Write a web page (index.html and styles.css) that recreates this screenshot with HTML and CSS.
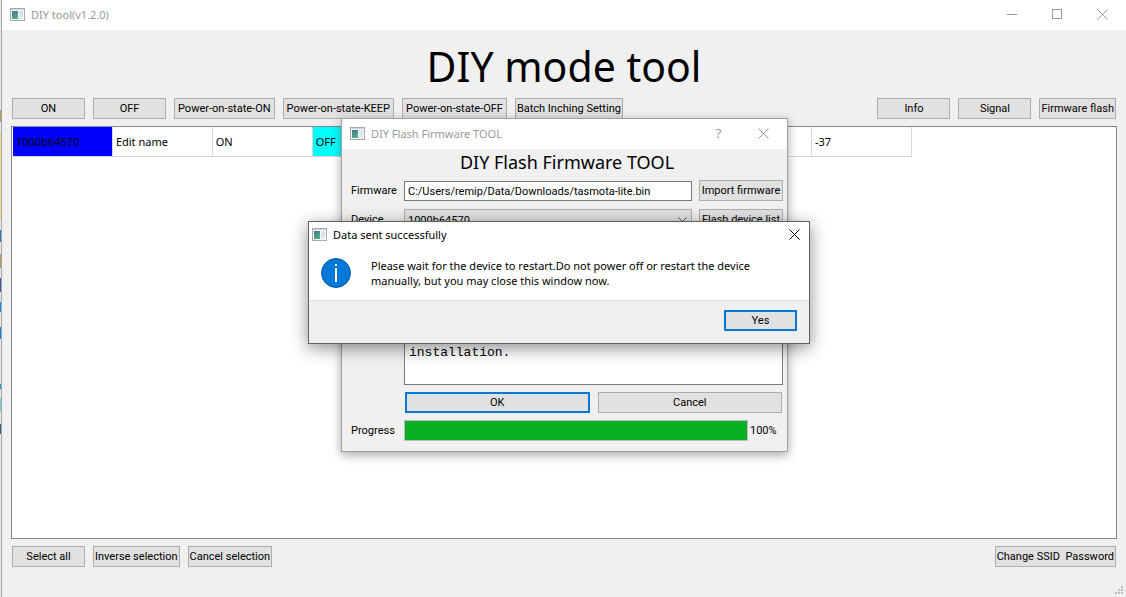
FILE: index.html
```html
<!DOCTYPE html>
<html lang="en">
<head>
  <meta charset="UTF-8" />
  <meta name="viewport" content="width=device-width, initial-scale=1.0"/>
  <title>DIY tool(v1.2.0)</title>
  <link rel="stylesheet" href="styles.css">
</head>
<body>
  <!-- App icon shared by the three windows -->
  <svg class="defs" width="0" height="0" aria-hidden="true">
    <defs>
      <linearGradient id="iconFill" x1="0" y1="0" x2="0.4" y2="1">
        <stop offset="0" stop-color="#4a6f9c"/>
        <stop offset="1" stop-color="#4fae7d"/>
      </linearGradient>
    </defs>
    <symbol id="app-icon" viewBox="0 0 15 13">
      <rect x="0.5" y="0.5" width="14" height="12" fill="#f4f7f9" stroke="#a3abb1"/>
      <rect x="1" y="1" width="13" height="1" fill="#c9d2da"/>
      <rect x="2" y="3" width="6" height="8" fill="url(#iconFill)"/>
      <rect x="9" y="3" width="3" height="8" fill="#dde3e8"/>
      <rect x="12" y="3" width="1" height="5" fill="#cfe6da"/>
    </symbol>
    <symbol id="close-icon" viewBox="0 0 11 11">
      <path d="M0.5 0.5 L10.5 10.5 M10.5 0.5 L0.5 10.5" fill="none" stroke="currentColor"/>
    </symbol>
  </svg>

  <div class="desktop-edge"></div>

  <!-- ================== Main window ================== -->
  <main class="main-window">
    <header class="titlebar inactive">
      <svg class="app-icon" aria-hidden="true"><use href="#app-icon"/></svg>
      <span class="window-name">DIY tool(v1.2.0)</span>
      <button class="caption" aria-label="Minimize">
        <svg width="11" height="11"><path d="M0 5.5 H10" stroke="currentColor"/></svg>
      </button>
      <button class="caption" aria-label="Maximize">
        <svg width="11" height="11"><rect x="0.5" y="0.5" width="9" height="9" fill="none" stroke="currentColor"/></svg>
      </button>
      <button class="caption" aria-label="Close"><svg width="11" height="11"><use href="#close-icon"/></svg></button>
    </header>

    <h1>DIY mode tool</h1>

    <div class="toolbar">
      <button class="btn">ON</button>
      <button class="btn">OFF</button>
      <button class="btn state">Power-on-state-ON</button>
      <button class="btn state">Power-on-state-KEEP</button>
      <button class="btn state">Power-on-state-OFF</button>
      <button class="btn">Batch Inching Setting</button>
      <span class="spacer"></span>
      <button class="btn">Info</button>
      <button class="btn">Signal</button>
      <button class="btn">Firmware flash</button>
    </div>

    <div class="device-list">
      <table>
        <tr>
          <td class="selected">1000b64570</td>
          <td>Edit name</td>
          <td>ON</td>
          <td class="off">OFF</td>
          <td></td>
          <td></td>
          <td></td>
          <td></td>
          <td>-37</td>
        </tr>
      </table>
    </div>

    <div class="toolbar">
      <button class="btn">Select all</button>
      <button class="btn">Inverse selection</button>
      <button class="btn">Cancel selection</button>
      <span class="spacer"></span>
      <button class="btn">Change SSID&nbsp; Password</button>
    </div>

    <footer class="statusbar">
      <svg width="8" height="8" aria-hidden="true" fill="#bfbfbf">
        <rect x="6" y="0" width="2" height="2"/>
        <rect x="3" y="3" width="2" height="2"/><rect x="6" y="3" width="2" height="2"/>
        <rect x="0" y="6" width="2" height="2"/><rect x="3" y="6" width="2" height="2"/><rect x="6" y="6" width="2" height="2"/>
      </svg>
    </footer>
  </main>

  <!-- ================== Flash firmware dialog ================== -->
  <section class="dialog flash-dialog">
    <header class="titlebar inactive">
      <svg class="app-icon" aria-hidden="true"><use href="#app-icon"/></svg>
      <span class="window-name">DIY Flash Firmware TOOL</span>
      <button class="caption help" aria-label="Help">?</button>
      <button class="caption" aria-label="Close"><svg width="11" height="11"><use href="#close-icon"/></svg></button>
    </header>
    <form class="flash-form">
      <h2>DIY Flash Firmware TOOL</h2>
      <div class="field">
        <label for="firmware">Firmware</label>
        <input type="text" id="firmware" value="C:/Users/remip/Data/Downloads/tasmota-lite.bin">
        <button type="button" class="btn">Import firmware</button>
      </div>
      <div class="field">
        <label for="device">Device</label>
        <span class="select-wrap">
          <select id="device"><option>1000b64570</option></select>
          <svg width="9" height="5" aria-hidden="true"><path d="M0.5 0.5 L4.5 4.5 L8.5 0.5" fill="none" stroke="#555"/></svg>
        </span>
        <button type="button" class="btn">Flash device list</button>
      </div>
      <textarea class="log" aria-label="Log" readonly>installation.</textarea>
      <div class="actions">
        <button type="button" class="btn default">OK</button>
        <button type="button" class="btn">Cancel</button>
      </div>
      <div class="field progress-field">
        <label for="progress">Progress</label>
        <progress id="progress" value="100" max="100"></progress>
        <span>100%</span>
      </div>
    </form>
  </section>

  <!-- ================== Message box ================== -->
  <section class="dialog message-box">
    <header class="titlebar">
      <svg class="app-icon" aria-hidden="true"><use href="#app-icon"/></svg>
      <span class="window-name">Data sent successfully</span>
      <button class="caption" aria-label="Close"><svg width="11" height="11"><use href="#close-icon"/></svg></button>
    </header>
    <div class="message">
      <svg class="info-icon" width="30" height="30" aria-hidden="true">
        <circle cx="15" cy="15" r="14.5" fill="#0078d7" stroke="#0a5a9c"/>
        <rect x="14" y="6" width="2" height="2" fill="#fff"/>
        <rect x="14" y="10" width="2" height="14" fill="#fff"/>
      </svg>
      <p>Please wait for the device to restart.Do not power off or restart the device manually, but you may close this window now.</p>
    </div>
    <div class="message-actions">
      <button class="btn default">Yes</button>
    </div>
  </section>
</body>
</html>
```
FILE: styles.css
```css
* {
  box-sizing: border-box;
}
body {
  display: flex;
  min-height: 100vh;
  margin: 0;
  overflow: hidden;
  font-family: "Noto Sans", Tahoma, sans-serif;
  font-size: 11px;
  color: #000;
}
button,
input,
select {
  font: inherit;
  color: inherit;
}
.defs {
  position: absolute;
}

/* sliver of the window behind */
.desktop-edge {
  width: 2px;
  border-right: 1px solid #a6a6a6;
  background: linear-gradient(#e8e8e8 110px, #b09a60 110px 122px, #e8e8e8 122px 133px,
    #f0d890 133px 220px, #e8e8e8 220px 230px, #2a7ab8 230px 242px, #e8e8e8 242px 254px,
    #b09a60 254px 268px, #e8e8e8 268px 278px, #4058a0 278px 292px, #e8e8e8 292px 302px,
    #1a90e0 302px 312px, #e8e8e8 312px 327px, #0a84dc 327px 339px, #e8e8e8 339px 384px,
    #0a9ae0 384px 389px, #e8e8e8 389px 398px, #7fd0d0 398px 412px, #e8e8e8 412px 424px,
    #406080 424px 434px, #e8e8e8 434px);
}

/* title bars */
.titlebar {
  display: flex;
  align-items: center;
  height: 30px;
  padding: 0 1px 2px 8px;
  background: #fff;
}
.inactive {
  color: #999;
}
.app-icon {
  width: 15px;
  height: 13px;
  margin-right: 6px;
}
.window-name {
  flex: 1;
}
.caption {
  display: flex;
  align-items: center;
  justify-content: center;
  width: 45px;
  height: 28px;
  padding: 0;
  border: none;
  background: none;
}
.help {
  font-size: 13px;
}

/* main window */
.main-window {
  display: flex;
  flex: 1;
  flex-direction: column;
  background: #f0f0f0;
}
h1,
h2 {
  margin: 0;
  font-family: "Noto Sans", Tahoma, sans-serif;
  font-weight: normal;
  text-align: center;
}
h1 {
  height: 68px;
  font-size: 41px;
  line-height: 72px;
}
.toolbar {
  display: flex;
  gap: 8px;
  padding: 0 10px;
}
.spacer {
  flex: 1;
}
.btn {
  min-width: 73px;
  height: 21px;
  padding: 1px 1px 0;
  border: 1px solid #adadad;
  background: #e1e1e1;
  font-family: Roboto, Tahoma, sans-serif;
  line-height: 18px;
  white-space: nowrap;
}
.state {
  padding: 1px 3px 0;
}
.default {
  border: 2px solid #0078d7;
  line-height: 16px;
}
.device-list {
  flex: 1;
  margin: 7px 9px;
  border: 1px solid #828790;
  background: #fff;
}
table {
  width: 900px;
  table-layout: fixed;
  border-collapse: collapse;
}
td {
  height: 29px;
  padding: 0 3px;
  border: solid #d8d8d8;
  border-width: 0 1px 1px 0;
}
.selected {
  border-left: 1px solid #fff;
  background: #00f;
}
.off {
  background: #0ff;
}
.statusbar {
  display: flex;
  align-items: flex-end;
  justify-content: flex-end;
  height: 30px;
  padding: 3px;
}

/* windows on top */
.dialog {
  position: absolute;
  box-shadow: 0 3px 10px rgba(0, 0, 0, 0.35);
}
.flash-dialog {
  left: 341px;
  top: 118px;
  width: 447px;
  border: 1px solid #a0a0a0;
  background: #f0f0f0;
}
.flash-form {
  display: flex;
  flex-direction: column;
  gap: 7px;
  padding: 0 4px 9px 9px;
  font-family: Roboto, Tahoma, sans-serif;
}
h2 {
  height: 24px;
  font-size: 18px;
  line-height: 27px;
}
.field {
  display: grid;
  grid-template-columns: 53px 1fr 84px;
  align-items: center;
  height: 21px;
  margin-bottom: 1px;
}
#firmware {
  height: 20px;
  margin-right: 7px;
  padding: 1px 3px 0;
  border: 1px solid #7a7a7a;
  background: #fff;
}
.select-wrap {
  display: flex;
  align-items: center;
  height: 21px;
  margin-right: 7px;
  border: 1px solid #adadad;
  background: #e1e1e1;
}
.select-wrap select {
  flex: 1;
  padding: 1px 3px 0;
  border: none;
  background: none;
  appearance: none;
}
.select-wrap svg {
  margin-right: 4px;
}
.log {
  height: 147px;
  margin-left: 53px;
  padding: 106px 4px 0;
  border: 1px solid #7a7a7a;
  font-family: "Liberation Mono", monospace;
  font-size: 13px;
  line-height: 16px;
  resize: none;
}
.actions {
  display: grid;
  grid-template-columns: 1fr 1fr;
  gap: 8px;
  margin: 0 1px 0 54px;
}
.progress-field {
  grid-template-columns: 53px 1fr 35px;
}
progress {
  width: 100%;
  height: 21px;
  border: 1px solid #bcbcbc;
  appearance: none;
}
progress::-webkit-progress-bar {
  background: #e6e6e6;
}
progress::-webkit-progress-value {
  background: #06b025;
}
.progress-field span {
  padding-left: 2px;
}

/* message box */
.message-box {
  left: 308px;
  top: 221px;
  width: 502px;
  border: 1px solid #606060;
  background: #fff;
  box-shadow: 0 4px 16px rgba(0, 0, 0, 0.45);
}
.message-box .titlebar {
  height: 24px;
  padding: 0 0 0 3px;
}
.message-box .caption {
  width: 30px;
  height: 24px;
}
.message {
  display: flex;
  gap: 20px;
  height: 54px;
  padding: 12px 48px 0 12px;
  line-height: 15px;
}
.info-icon {
  flex: none;
}
.message p {
  margin: 0;
}
.message-actions {
  display: flex;
  justify-content: flex-end;
  padding: 9px 12px 12px;
  border-top: 1px solid #dfdfdf;
  background: #f0f0f0;
}
```
